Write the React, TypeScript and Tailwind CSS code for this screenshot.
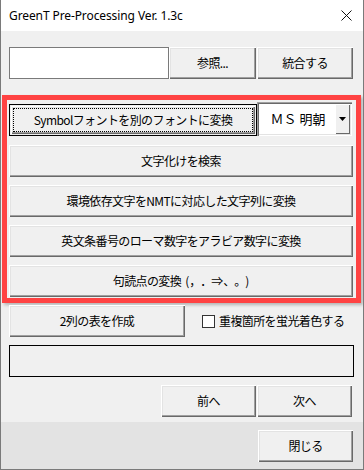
import type { ReactNode } from "react";

const jp = "font-['Noto_Sans_CJK_JP',sans-serif]";

// classic raised Windows button
function Btn({ children, className = "" }: { children: ReactNode; className?: string }) {
  return (
    <button
      className={`flex items-center justify-center bg-[#f0f0f0] text-[12px] text-black leading-none shadow-[inset_1px_1px_0_#ffffff,inset_-1px_-1px_0_#696969,inset_-2px_-2px_0_#a0a0a0,inset_2px_2px_0_#e3e3e3] ${jp} ${className}`}
    >
      {children}
    </button>
  );
}

const rows = [
  "文字化けを検索",
  "環境依存文字をNMTに対応した文字列に変換",
  "英文条番号のローマ数字をアラビア数字に変換",
];

const punct = ["，", "．", "⇒", "、", "。"];

export default function App() {
  return (
    <div className="w-[364px] h-[470px] bg-[#f0f0f0] border-x border-b border-[#7a7a7a] flex flex-col overflow-hidden">
      {/* Title bar */}
      <div className="h-[31px] bg-white flex items-center justify-between pl-[8px] pr-[10px] shrink-0">
        <span className="font-['Noto_Sans',sans-serif] text-[12px] text-black tracking-[-0.1px]">
          GreenT Pre-Processing Ver. 1.3c
        </span>
        <svg width="11" height="11" viewBox="0 0 11 11" className="mr-[1px]">
          <path d="M0.5 0.5 L10.5 10.5 M10.5 0.5 L0.5 10.5" stroke="#111" strokeWidth="1" fill="none" />
        </svg>
      </div>

      <div className="flex-1 flex flex-col">
        {/* File row */}
        <div className="flex mt-[16px] ml-[8px]">
          <div className="w-[160px] h-[32px] bg-white border border-[#7a7a7a]" />
          <Btn className="w-[87px] h-[32px] tracking-[-0.6px]">参照...</Btn>
          <Btn className="w-[96px] h-[32px] ml-[1px] tracking-[-0.6px]">統合する</Btn>
        </div>

        {/* Highlighted group */}
        <div className="ml-[1px] mt-[16px] w-[359px] h-[208px] border-[5px] border-[#ff4343] pt-[3px] pl-[2px] pr-[2px] flex flex-col gap-[8px] shadow-[2px_2px_3px_rgba(0,0,0,0.25)]">
          <div className="flex items-end -mt-[1px]">
            <div className="w-[248px] h-[32px] border border-black p-[1px] mt-[1px]">
              <Btn className="w-full h-full relative tracking-[-0.6px]">
                <span className="absolute inset-[2px] border border-dotted border-black" />
                Symbolフォントを別のフォントに変換
              </Btn>
            </div>
            <div className="w-[95px] h-[34px] bg-white flex shadow-[inset_1px_1px_0_#a0a0a0,inset_2px_2px_0_#696969,inset_-1px_-1px_0_#ffffff,inset_-2px_-2px_0_#e3e3e3]">
              <span className={`flex-1 flex items-center justify-center pl-[4px] text-[13px] text-black ${jp}`}>
                ＭＳ 明朝
              </span>
              <div className="w-[15px] my-[2px] mr-[2px] bg-[#f0f0f0] flex items-center justify-center shadow-[inset_1px_1px_0_#ffffff,inset_-1px_-1px_0_#696969]">
                <svg width="7" height="4" viewBox="0 0 7 4">
                  <path d="M0 0 H7 L3.5 4 Z" fill="#000" />
                </svg>
              </div>
            </div>
          </div>
          {rows.map((r, i) => (
            <Btn key={r} className={`h-[32px] w-[344px] tracking-[-0.6px] ${i === 0 ? "mt-[1px]" : ""}`}>
              {r}
            </Btn>
          ))}
          <Btn className="h-[32px] w-[344px]">
            <span className="tracking-[-0.6px]">句読点の変換</span>
            <span className="ml-[4px]">(</span>
            {punct.map((p) => (
              <span key={p} className={`inline-block text-left ${p === "⇒" ? "w-[12px] text-center" : "w-[11px]"}`}>
                {p}
              </span>
            ))}
            <span>)</span>
          </Btn>
        </div>

        {/* Table row */}
        <div className="flex items-center mt-[2px] ml-[8px]">
          <Btn className="w-[176px] h-[32px] tracking-[-0.6px]">2列の表を作成</Btn>
          <div className="ml-[17px] w-[13px] h-[13px] bg-white border border-[#333]" />
          <span className={`ml-[4px] text-[12px] text-black tracking-[-0.6px] ${jp}`}>重複箇所を蛍光着色する</span>
        </div>

        {/* Status frame */}
        <div className="ml-[8px] mt-[8px] w-[345px] h-[32px] border border-black" />

        {/* Nav */}
        <div className="flex ml-[160px] mt-[8px]">
          <Btn className="w-[95px] h-[32px] tracking-[-0.6px]">前へ</Btn>
          <Btn className="w-[95px] h-[32px] ml-[1px] tracking-[-0.6px]">次へ</Btn>
        </div>

        {/* Footer */}
        <div className="mt-auto h-[47px] bg-[#e3e3e3] flex justify-end items-start pt-[8px] pr-[10px]">
          <Btn className="w-[95px] h-[32px] tracking-[-0.6px]">閉じる</Btn>
        </div>
      </div>
    </div>
  );
}
